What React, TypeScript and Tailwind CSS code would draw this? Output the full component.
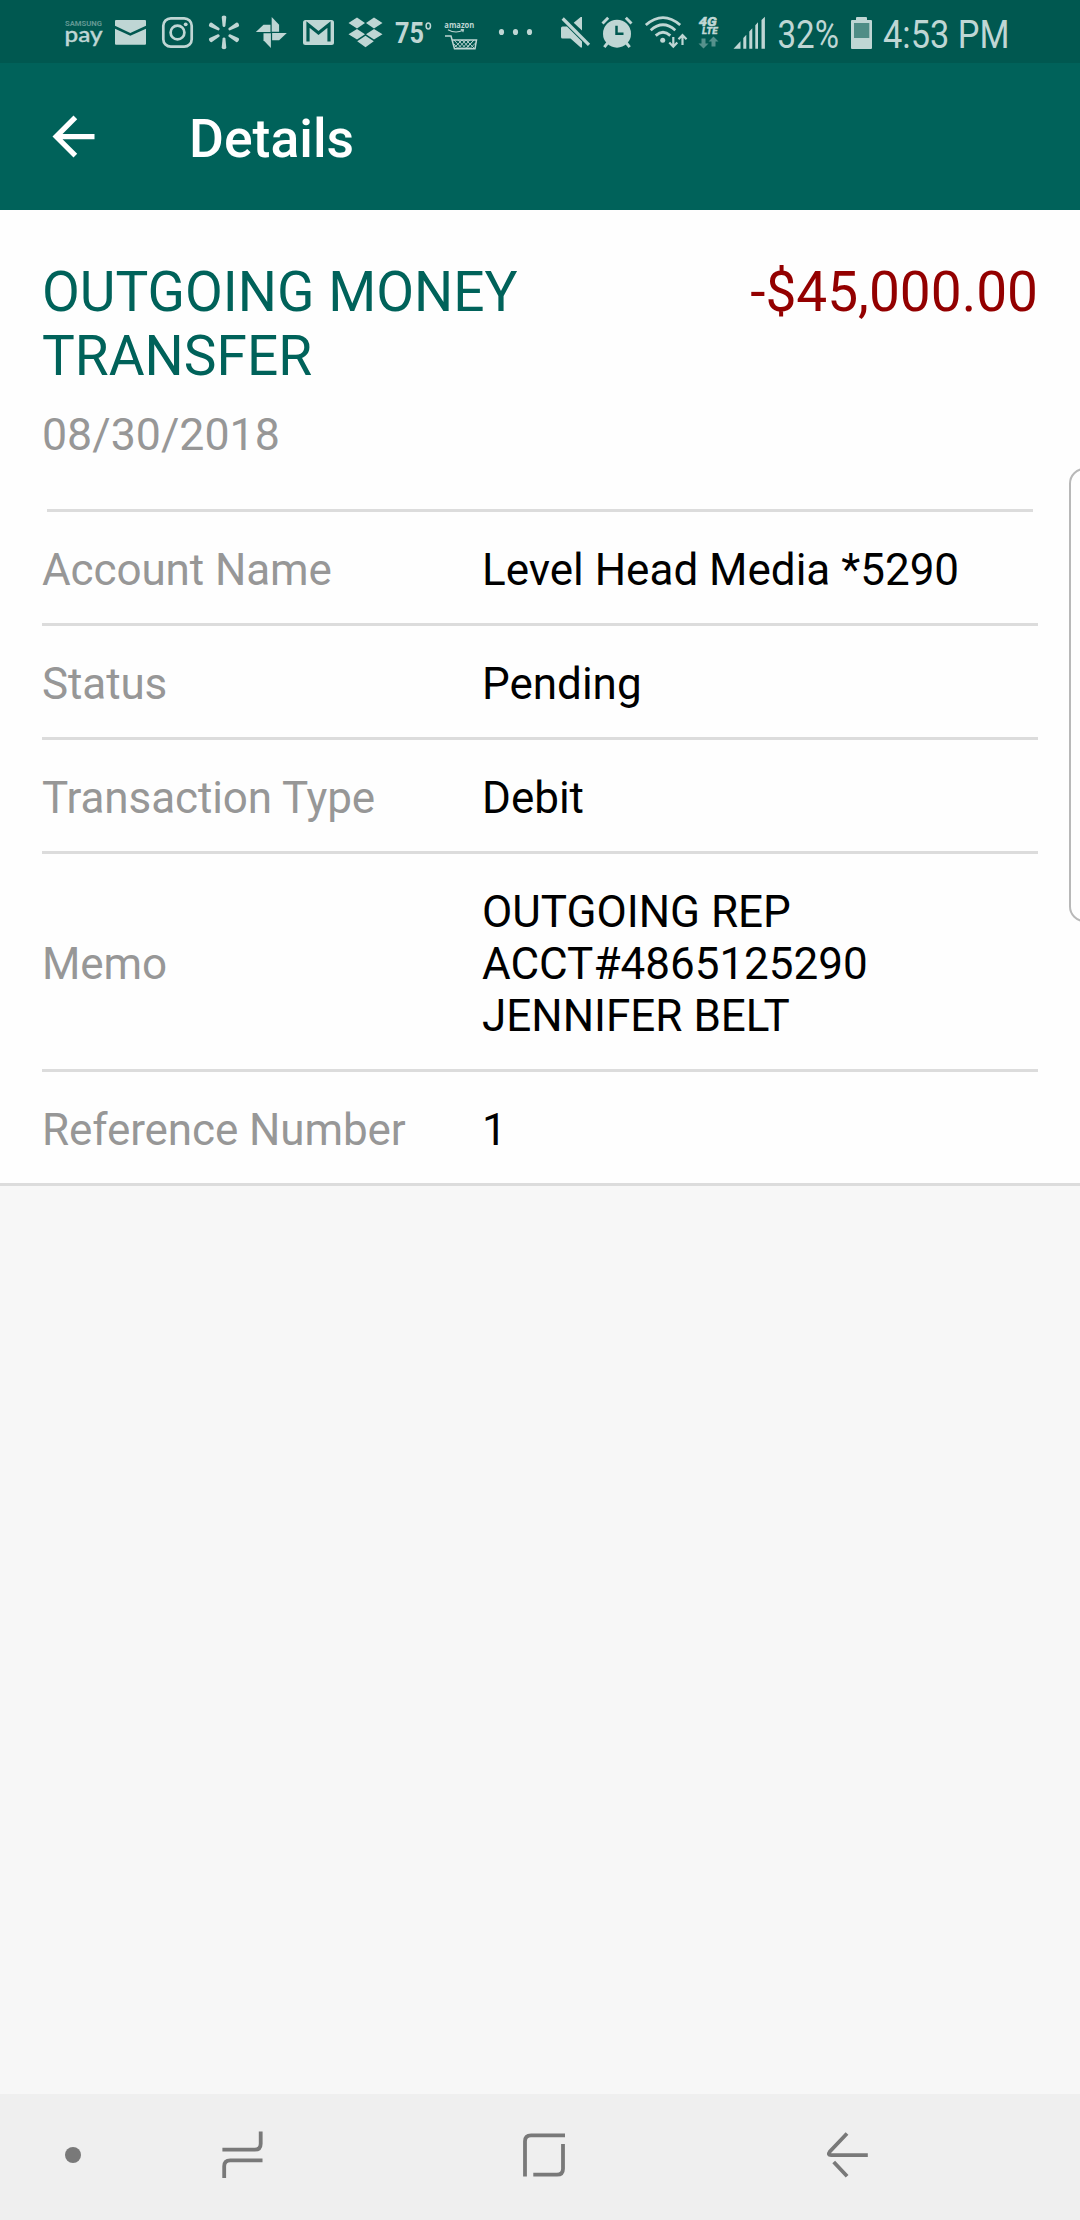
import type { ReactNode } from "react";

const rows = [
  { label: "Account Name", value: "Level Head Media *5290" },
  { label: "Status", value: "Pending" },
  { label: "Transaction Type", value: "Debit" },
  { label: "Memo", value: "OUTGOING REP\nACCT#4865125290\nJENNIFER BELT" },
  { label: "Reference Number", value: "1" },
];

// Icons share the coordinate system of the bar they sit in, x is where the cell starts
function BarIcon({ x, y = 0, w, h = 63, children }: { x: number; y?: number; w: number; h?: number; children: ReactNode }) {
  return (
    <svg className="shrink-0 overflow-visible" width={w} height={h} viewBox={`${x} ${y} ${w} ${h}`} fill="currentColor">
      {children}
    </svg>
  );
}

function StatusBar() {
  return (
    <div className="flex h-[63px] shrink-0 bg-[#005850] pl-[60px] text-[#bfd6d4]">
      {/* Samsung Pay */}
      <BarIcon x={60} w={48}>
        <text x="65" y="25.7" fontSize="7.6" fontWeight="700" textLength="37" lengthAdjust="spacingAndGlyphs" opacity="0.5">SAMSUNG</text>
        <text x="64.5" y="41.5" fontSize="22" fontFamily="Lato" fontWeight="500" stroke="currentColor" strokeWidth="0.4" textLength="38" lengthAdjust="spacingAndGlyphs">pay</text>
      </BarIcon>
      {/* Mail */}
      <BarIcon x={108} w={48}>
        <path d="M116 20h29q1 0 1 1v4.7l-15.7 7.3L115 25.7V21q0-1 1-1z" />
        <path d="M115 28.7l15.3 7L146 28.7V43.7q0 1-1 1h-29q-1 0-1-1z" />
      </BarIcon>
      {/* Instagram */}
      <BarIcon x={156} w={48}>
        <rect x="163.3" y="18.3" width="28.4" height="28.4" rx="7.5" fill="none" stroke="currentColor" strokeWidth="2.7" />
        <circle cx="177.5" cy="32.5" r="6.9" fill="none" stroke="currentColor" strokeWidth="2.7" />
        <circle cx="185.7" cy="24.3" r="1.9" />
      </BarIcon>
      {/* Spark */}
      <BarIcon x={204} w={44}>
        {[0, 60, 120, 180, 240, 300].map((deg) => (
          <path key={deg} transform={`rotate(${deg} 224 32.3)`} d="M221.7 17q0-1.6 2.3-1.6t2.3 1.6l-0.9 9q-0.2 1-1.4 1t-1.4-1z" />
        ))}
      </BarIcon>
      {/* Photos pinwheel */}
      <BarIcon x={248} w={48}>
        {[0, 90, 180, 270].map((deg) => (
          <path key={deg} transform={`rotate(${deg} 271.3 32.5)`} d="M271.7 17l7.4 7.7v7h-7.4z" />
        ))}
      </BarIcon>
      {/* Gmail */}
      <BarIcon x={296} w={46}>
        <rect x="303" y="20" width="31" height="25" rx="2.5" />
        <path d="M308 41.5V24.5L318.5 33L329 24.5V41.5" fill="none" stroke="#005850" strokeWidth="3.2" />
      </BarIcon>
      {/* Dropbox */}
      <BarIcon x={342} w={48}>
        <path d="M357 17.5l8 5.5-8 5.5-8.5-5.5zM374 17.5l8.5 5.5-8.5 5.5-8-5.5zM357 29l8 5.2-8 5.3-8.5-5.3zM374 29l8.5 5.2-8.5 5.3-8-5.3zM365.5 35.7l8.3 5.5-8.3 6-8.3-6z" />
      </BarIcon>
      <BarIcon x={390} w={48}>
        <text x="395" y="42.7" fontSize="29" fontWeight="700" textLength="29" lengthAdjust="spacingAndGlyphs">75</text>
        <ellipse cx="428.3" cy="26" rx="2.2" ry="2.9" fill="none" stroke="currentColor" strokeWidth="1.5" />
      </BarIcon>
      {/* Amazon shopping */}
      <BarIcon x={438} w={48}>
        <text x="444.3" y="28.3" fontSize="9.5" fontFamily="Open Sans" fontWeight="700" textLength="30" lengthAdjust="spacingAndGlyphs">amazon</text>
        <path d="M448 29.7q7.5 4.3 15 0.6M460.8 29.5l2.7 0.3-0.7 2.3" fill="none" stroke="currentColor" strokeWidth="1.1" />
        <path d="M445 36h6l3.5 12.8h20.5l1.5-8.8h-24" fill="none" stroke="currentColor" strokeWidth="1.5" />
        <path d="M454 40l8 8.5 8-8.5M458 40l8 8.5 8-8.5M462 40l-7 7M466 40l-8 8.5M454 44l4 4.5M466 40l8 8M462 40l8 8.5 6-6M474 40l-8 8.5" fill="none" stroke="currentColor" strokeWidth="0.9" />
      </BarIcon>
      <BarIcon x={486} w={66}>
        <ellipse cx="501.5" cy="32" rx="2.6" ry="3.1" />
        <ellipse cx="515.5" cy="32" rx="2.6" ry="3.1" />
        <ellipse cx="529.5" cy="32" rx="2.6" ry="3.1" />
      </BarIcon>
      {/* Sound off */}
      <BarIcon x={552} w={44}>
        <path d="M573.7 22.7l7-5.7h1.3v13.5zM562.5 26.5h4.5L582 41.5V47.5h-1.3l-10.2-9h-8q-1.5 0-1.5-1.5v-9q0-1.5 1.5-1.5z" />
        <path d="M562.7 18.5l26.3 26.3" stroke="currentColor" strokeWidth="3.2" />
      </BarIcon>
      {/* Alarm */}
      <BarIcon x={596} w={44}>
        <circle cx="617" cy="33.7" r="14" />
        <path d="M602.5 23.5l5.7-5.7M631.5 23.5l-5.7-5.7M608 42.5l-3.7 4.7M626 42.5l3.7 4.7" stroke="currentColor" strokeWidth="2.9" />
        <path d="M616.5 25.7v8h7" fill="none" stroke="#005850" strokeWidth="2.5" />
      </BarIcon>
      {/* Wifi */}
      <BarIcon x={640} w={52}>
        <path d="M645.8 25q17.2-14.8 34.4 0M650.7 30.3q12.3-11 24.6 0M655.7 35.6q7.3-6.6 14.6 0" fill="none" stroke="currentColor" strokeWidth="2.8" />
        <circle cx="662.7" cy="40.3" r="2.5" />
        <path d="M673.3 37v9M669.3 42.5l4 4.2 4-4.2M682.5 45v-9M678.5 39.3l4-4.2 4 4.2" fill="none" stroke="currentColor" strokeWidth="2.2" />
      </BarIcon>
      {/* 4G LTE */}
      <BarIcon x={692} w={34}>
        <text x="698.7" y="26" fontSize="12" fontWeight="900" fontStyle="italic" stroke="currentColor" strokeWidth="0.4" textLength="18" lengthAdjust="spacingAndGlyphs">4G</text>
        <text x="702" y="34" fontSize="9.5" fontWeight="900" fontStyle="italic" stroke="currentColor" strokeWidth="0.3" textLength="15.5" lengthAdjust="spacingAndGlyphs">LTE</text>
        <path d="M701.5 38.5h4v5h3l-5 5-5-5h3zM711.5 46.5h4v-5h3l-5-5-5 5h3z" opacity="0.45" />
      </BarIcon>
      {/* Signal */}
      <BarIcon x={726} w={46}>
        <path d="M733.5 48.7l7-7.5v7.5zM743.3 48.7v-10.7l3-3.3v14zM749.3 48.7v-17.2l3-3.2v20.4zM755.3 48.7v-23.5l2.7-3v26.5zM761.5 48.7v-28.7l3.4-3.3v32z" />
      </BarIcon>
      <BarIcon x={772} w={73}>
        <text x="777.5" y="48" fontSize="39" textLength="61.5" lengthAdjust="spacingAndGlyphs">32%</text>
      </BarIcon>
      {/* Battery */}
      <BarIcon x={845} w={33}>
        <path d="M857 17h9q1 0 1 1v2h4q1 0 1 1v27q0 1-1 1h-19q-1 0-1-1V21q0-1 1-1h4v-2q0-1 1-1z" />
        <rect x="854" y="23" width="15.3" height="15" fill="#4f8d86" />
      </BarIcon>
      <BarIcon x={878} w={140}>
        <text x="883" y="48" fontSize="39" textLength="126.5" lengthAdjust="spacingAndGlyphs">4:53 PM</text>
      </BarIcon>
    </div>
  );
}

function NavBar() {
  return (
    <div className="flex h-[126px] shrink-0 bg-[#efefef] text-[#797979]">
      <BarIcon x={0} y={2094} w={146} h={126}>
        <circle cx="73" cy="2155" r="8" />
      </BarIcon>
      <BarIcon x={146} y={2094} w={254} h={126}>
        <path d="M222.4 2149.7h32.3q6 0 6-6V2131.5M262.5 2160.3h-32.3q-6 0-6 6V2178" fill="none" stroke="currentColor" strokeWidth="3.8" />
      </BarIcon>
      <BarIcon x={400} y={2094} w={288} h={126}>
        <path d="M525 2176.5v-35.2q0-6 6-6h34M563 2144v24.7q0 6-6 6h-23.7" fill="none" stroke="currentColor" strokeWidth="3.8" />
      </BarIcon>
      <BarIcon x={688} y={2094} w={392} h={126}>
        <path d="M847 2133.5l-17.3 18.3q-2.5 3.3 1.5 3.4H867.8M833.7 2162l13.4 14.3" fill="none" stroke="currentColor" strokeWidth="3.8" />
      </BarIcon>
    </div>
  );
}

export default function App() {
  return (
    <div className="relative flex h-[2220px] w-[1080px] flex-col overflow-hidden bg-[#f7f7f7] font-['Roboto',sans-serif]">
      <StatusBar />

      <header className="flex h-[147px] shrink-0 items-center bg-[#00625a] pl-[42px] text-white">
        <svg className="h-[63px] w-[63px]" viewBox="0 0 24 24" fill="currentColor">
          <path d="M20 11H7.83l5.59-5.59L12 4l-8 8 8 8 1.41-1.41L7.83 13H20v-2z" />
        </svg>
        <h1 className="ml-[84px] pt-[6px] text-[53.5px] font-medium">Details</h1>
      </header>

      <main className="border-b-[3px] border-[#dcdcdc] bg-[#fefefe]">
        <section className="px-[42px] pt-[50px]">
          <div className="flex items-start justify-between text-[55px] leading-[64px]">
            <h2 className="w-[520px] text-[#00625a]">OUTGOING MONEY TRANSFER</h2>
            <p className="text-[#930000]">-$45,000.00</p>
          </div>
          <p className="mt-[21px] text-[44.7px] leading-[53px] text-[#979797]">08/30/2018</p>
          <div className="mx-[5px] mt-[47px] h-[3px] bg-[#dcdcdc]" />
        </section>

        <dl className="mx-[42px] divide-y-[3px] divide-[#dcdcdc] text-[44px] leading-[52px]">
          {rows.map((row) => (
            <div key={row.label} className="flex items-center pt-[32px] pb-[27px]">
              <dt className="w-[440px] tracking-[-0.1px] text-[#979797]">{row.label}</dt>
              <dd className="whitespace-pre-line text-black">{row.value}</dd>
            </div>
          ))}
        </dl>
      </main>

      <div className="flex-1" />
      <NavBar />

      {/* Edge panel handle */}
      <div className="absolute top-[468px] -right-[20px] h-[454px] w-[31px] rounded-[16px] border-2 border-[#b8b8b8]" />
    </div>
  );
}
